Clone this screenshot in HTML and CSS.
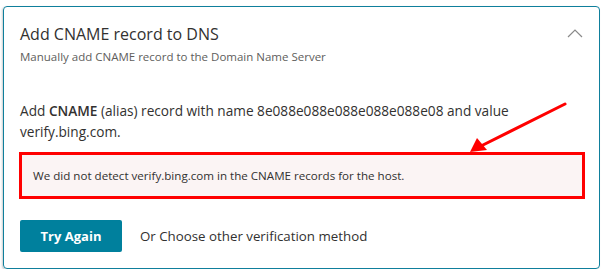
FILE: index.html
```html
<!DOCTYPE html>
<html>
<head>
<meta charset="utf-8">
<link rel="stylesheet" href="styles.css">
</head>
<body>
<div class="card">
  <div class="head">
    <div class="head-text">
      <h2 class="title">Add CNAME record to DNS</h2>
      <p class="subtitle">Manually add CNAME record to the Domain Name Server</p>
    </div>
    <svg class="chevron" width="16" height="10" viewBox="0 0 16 10"><path d="M1 9 L8 2 L15 9" fill="none" stroke="#8a8a8a" stroke-width="1.2"/></svg>
  </div>
  <p class="desc"><span>Add </span><b>CNAME</b><span> (alias) record with name 8e088e088e088e088e088e08 and value</span><br><span>verify.bing.com.</span></p>
  <div class="error">We did not detect verify.bing.com in the CNAME records for the host.</div>
  <div class="actions">
    <button class="btn">Try Again</button>
    <span class="alt">Or Choose other verification method</span>
  </div>
  <svg class="arrow" width="120" height="60" viewBox="0 0 120 60">
    <line x1="112" y1="4" x2="28" y2="46" stroke="#f00" stroke-width="3" stroke-linecap="round"/>
    <polygon points="17,52 24,38 34,50" fill="#f00"/>
  </svg>
</div>
</body>
</html>
```
FILE: styles.css
```css
html, body { margin: 0; padding: 0; background: #fff; }
body { font-family: "Open Sans", "Noto Sans", sans-serif; color: #323130; }
.card {
  position: relative;
  margin: 6px 0 0 3px;
  width: 597px;
  height: 263px;
  box-sizing: border-box;
  border: 1px solid #0f7f9c;
  border-radius: 4px;
  box-shadow: -1px 1px 2px rgba(0,0,0,0.2);
  padding: 16px 16px 0 16px;
}
.head { display: flex; justify-content: space-between; align-items: flex-start; }
.title { margin: 0; font-size: 16px; font-weight: 400; line-height: 22px; color: #323130; }
.subtitle { margin: 4px 0 0; font-size: 11.5px; line-height: 16px; color: #605e5c; }
.chevron { margin: 5px 0 0 0; }
.desc { margin: 35px 0 0; font-size: 13.65px; line-height: 21px; color: #323130; }
.desc b { font-weight: 600; }
.error {
  margin: 10px -2px 0 -1px;
  border: 3px solid #ff0000;
  background: #fbf4f4;
  height: 47px;
  box-sizing: border-box;
  padding: 0 11px;
  display: flex; align-items: center;
  font-size: 11.6px; color: #323130;
}
.actions { margin-top: 21px; display: flex; align-items: center; gap: 18px; }
.btn {
  width: 102px; height: 32px;
  border: none; border-radius: 2px;
  background: #00809d; color: #fff;
  font-family: inherit; font-size: 13px; font-weight: 700;
}
.alt { font-size: 13.3px; color: #323130; }
.arrow { position: absolute; left: 449px; top: 93px; }
```
